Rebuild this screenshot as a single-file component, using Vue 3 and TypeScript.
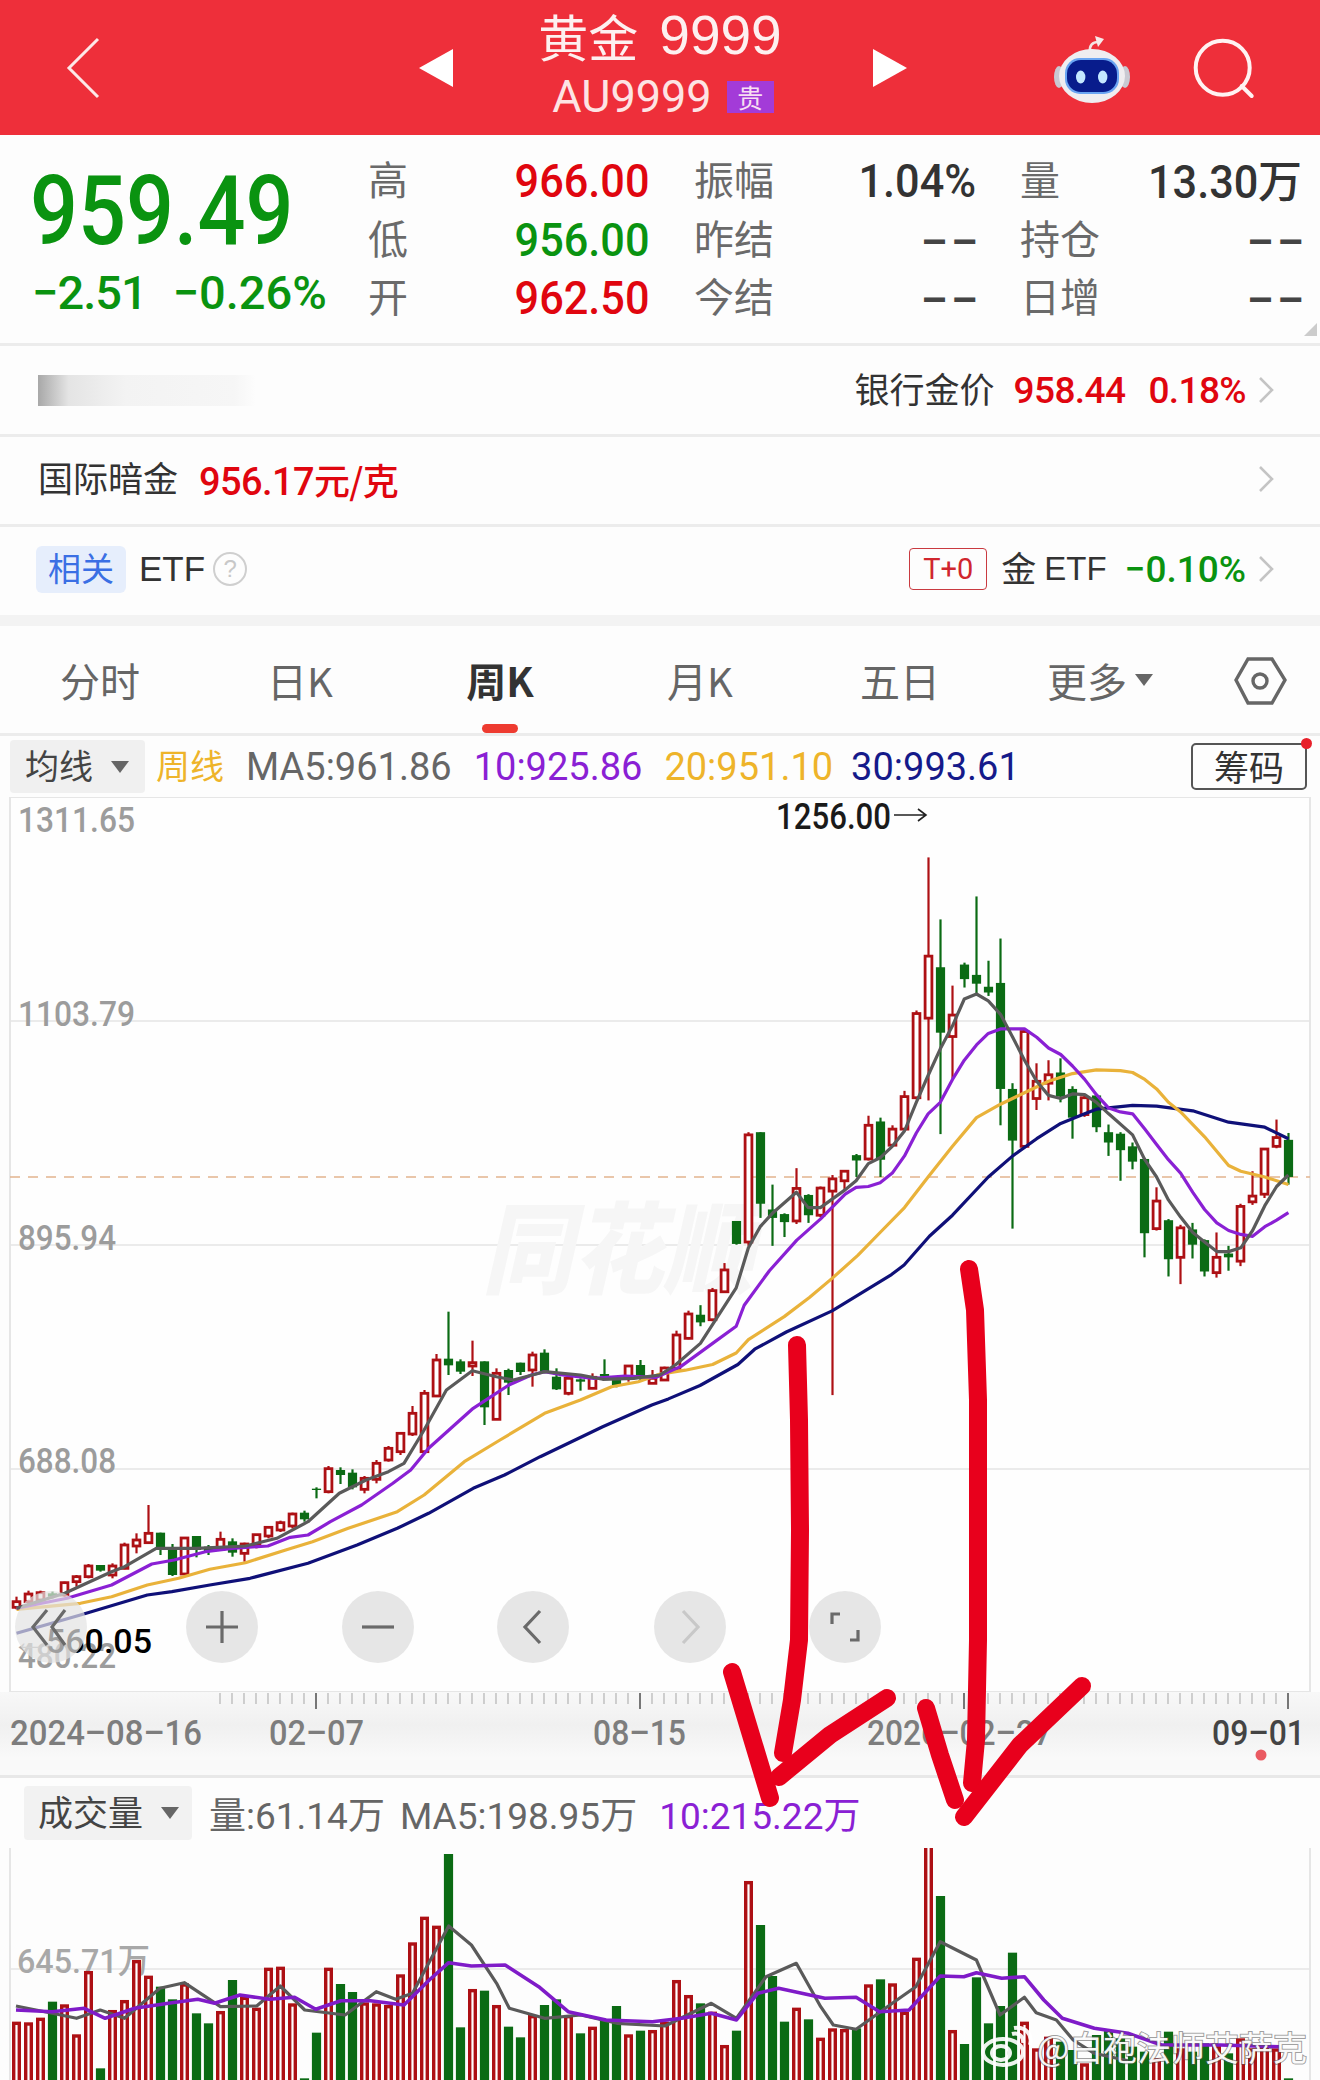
<template>
  <div class="page">
    <header class="topbar">
      <svg class="back" viewBox="0 0 34 62"><path d="M32 2 3 31l29 29" /></svg>
      <div class="arrow-l"></div>
      <div class="title">
        <div class="title__name"><span class="title__cjk">黄金</span><span>9999</span></div>
        <div class="title__code">AU9999<span class="title__tag">贵</span></div>
      </div>
      <div class="arrow-r"></div>
      <svg class="robot" viewBox="1050 30 84 74">
        <path d="M1090 50c-1-7 3-10 8-10" fill="none" stroke="#f3e4e4" stroke-width="2.6" />
        <path d="M1095 34l9 3-6 8z" fill="#f7eaea" />
        <ellipse cx="1059" cy="75" rx="5" ry="11" fill="#c9c9d2" />
        <ellipse cx="1125" cy="75" rx="5" ry="11" fill="#c9c9d2" />
        <ellipse cx="1092" cy="74" rx="33" ry="27" fill="#efedf0" />
        <rect x="1065" y="56" width="54" height="36" rx="15" fill="#6aa4f2" />
        <rect x="1067" y="58" width="50" height="32" rx="14" fill="#081c8c" />
        <ellipse cx="1080.7" cy="75" rx="4.7" ry="6.5" fill="#c4e8ff" />
        <ellipse cx="1102.7" cy="75" rx="4.7" ry="6.5" fill="#c4e8ff" />
      </svg>
      <svg class="search" viewBox="1190 34 68 66">
        <circle cx="1222.7" cy="66.7" r="27" />
        <path d="M1241.7 85l10 10" />
      </svg>
    </header>

    <section class="quote">
      <div class="quote__main">
        <div class="quote__price">959.49</div>
        <div class="quote__change">
          <span>−2.51</span>
          <span>−0.26%</span>
        </div>
      </div>
      <div class="quote__grid">
        <div v-for="cell in quoteCells" :key="cell.label" class="cell">
          <span class="cell__label">{{ cell.label }}</span>
          <span class="cell__value" :class="cell.tone">
            <span class="narrow">{{ cell.value }}</span><span v-if="cell.unit" class="cell__unit">{{ cell.unit }}</span>
          </span>
        </div>
      </div>
      <div class="quote__corner"></div>
    </section>

    <div class="info-row info-row--first">
      <div class="blurred"></div>
      <div class="info-row__right">
        <span class="info-text">银行金价</span>
        <span class="info-num red">958.44</span>
        <span class="info-num red info-num--pct">0.18%</span>
        <svg class="chev" viewBox="0 0 16 26"><path d="M2 1l12 12L2 25" /></svg>
      </div>
    </div>
    <div class="info-row info-row--gold">
      <span class="info-text">国际暗金</span>
      <span class="info-num red info-num--gold">956.17<span class="info-cjk">元/克</span></span>
      <svg class="chev chev--end" viewBox="0 0 16 26"><path d="M2 1l12 12L2 25" /></svg>
    </div>
    <div class="info-row info-row--last">
      <span class="badge-rel">相关</span>
      <span class="etf">ETF</span>
      <span class="help">?</span>
      <div class="info-row__right">
        <span class="badge-t0">T+0</span>
        <span class="etf etf--gold"><span class="info-text">金</span> ETF</span>
        <span class="info-num green info-num--etf">−0.10%</span>
        <svg class="chev" viewBox="0 0 16 26"><path d="M2 1l12 12L2 25" /></svg>
      </div>
    </div>
    <div class="gap"></div>

    <nav class="tabs">
      <div
        v-for="tab in tabs"
        :key="tab"
        class="tabs__item"
        :class="{ 'tabs__item--active': tab === '周K' }"
      >
        {{ tab }}<i v-if="tab === '更多'" class="caret caret--more"></i>
      </div>
      <div class="tabs__gear">
        <svg viewBox="1234 657 53 48">
          <path d="M1236 680l12-21h24l13 21-13 23h-24z" />
          <circle cx="1260" cy="681" r="7" />
        </svg>
      </div>
    </nav>

    <div class="ma-row">
      <div class="pick"><span class="pick__text">均线</span><i class="caret"></i></div>
      <span class="ma-week">周线</span>
      <span class="ma-val">MA5:961.86</span>
      <span class="ma-val purple">10:925.86</span>
      <span class="ma-val orange">20:951.10</span>
      <span class="ma-val navy">30:993.61</span>
      <div class="chips">筹码<i class="chips__dot"></i></div>
    </div>

    <svg class="kline" viewBox="0 797 1320 895">
      <rect x="10" y="797" width="1300" height="895" fill="#fefefe" stroke="#e6e6e6" stroke-width="2" />
      <line v-for="y in [1021, 1245, 1469]" :key="y" x1="10" x2="1310" :y1="y" :y2="y" stroke="#e4e4e4" stroke-width="1.5" />
      <text x="482" y="1286" class="watermark" textLength="272" lengthAdjust="spacingAndGlyphs">同花顺</text>
      <line x1="10" x2="1310" y1="1177" y2="1177" stroke="#e2b48f" stroke-width="1.5" stroke-dasharray="10 8" />
      <text
        v-for="label in priceLabels"
        :key="label.text"
        x="18"
        :y="label.y"
        class="price-label"
        :textLength="label.w"
        lengthAdjust="spacingAndGlyphs"
      >{{ label.text }}</text>

      <g v-for="c in candles" :key="c.x">
        <line :x1="c.x" :x2="c.x" :y1="c.hi" :y2="c.lo" :stroke="c.up ? RED : GREEN" stroke-width="2.2" />
        <rect
          v-if="c.up"
          :x="c.x - 3.4"
          :y="c.top"
          width="6.8"
          :height="c.bot - c.top"
          fill="#fff"
          :stroke="RED"
          stroke-width="2.8"
        />
        <rect v-else :x="c.x - 4.6" :y="c.top" width="9.2" :height="c.bot - c.top" :fill="GREEN" />
      </g>

      <polyline v-for="line in maLines" :key="line.color" :points="line.points" :stroke="line.color" class="ma-line" />

      <text x="776" y="829" class="peak" textLength="115" lengthAdjust="spacingAndGlyphs">1256.00</text>
      <path d="M894 815h32m-8-6 8 6-8 6" fill="none" stroke="#222" stroke-width="1.6" />

      <text x="152" y="1653" text-anchor="end" class="low"><tspan fill="#aaa">←</tspan>560.05</text>

      <g v-for="b in zoomButtons" :key="b.x">
        <ellipse :cx="b.x" cy="1627" rx="36" ry="36" fill="#e3e3e3" :fill-opacity="b.x === 51 ? 0.7 : 0.88" />
        <path
          :d="b.d"
          fill="none"
          :stroke="b.dim ? '#c8c8c8' : '#6a6a6a'"
          stroke-width="3.2"
          :transform="`translate(${b.x} 1627)`"
        />
      </g>
    </svg>

    <div class="axis">
      <svg viewBox="0 1692 1320 86">
        <line v-for="x in axisTicks" :key="x" :x1="x" :x2="x" y1="1693" y2="1704" stroke="#c4c4c4" stroke-width="1.6" />
        <line v-for="x in [316, 640, 964, 1288]" :key="x" :x1="x" :x2="x" y1="1693" y2="1709" stroke="#777" stroke-width="2" />
        <text
          v-for="d in axisDates"
          :key="d.text"
          :x="d.x"
          y="1745"
          class="axis-date"
          :fill="d.dark ? '#444' : '#7d7d7d'"
          :textLength="d.w"
          lengthAdjust="spacingAndGlyphs"
        >{{ d.text }}</text>
        <circle cx="1261" cy="1755" r="5.5" fill="#ea5a62" />
      </svg>
    </div>

    <div class="vol-head">
      <div class="pick pick--vol"><span class="pick__text">成交量</span><i class="caret"></i></div>
      <span class="vol-val">量:61.14万</span>
      <span class="vol-val">MA5:198.95万</span>
      <span class="vol-val purple">10:215.22万</span>
    </div>

    <svg class="vol" viewBox="0 1848 1320 232">
      <line x1="10" x2="10" y1="1848" y2="2080" stroke="#e6e6e6" stroke-width="2" />
      <line x1="1310" x2="1310" y1="1848" y2="2080" stroke="#e6e6e6" stroke-width="2" />
      <line x1="10" x2="1310" y1="1969" y2="1969" stroke="#e4e4e4" stroke-width="1.5" />
      <text x="17" y="1973" class="vol-label" textLength="133" lengthAdjust="spacingAndGlyphs">645.71万</text>
      <g v-for="b in volBars" :key="b.x">
        <rect
          v-if="b.up"
          :x="b.x - 2.8"
          :y="b.top"
          width="5.6"
          :height="2090 - b.top"
          fill="#fff"
          stroke="#ad1014"
          stroke-width="3.4"
        />
        <rect v-else :x="b.x - 4.6" :y="b.top" width="9.2" :height="2090 - b.top" :fill="GREEN" />
      </g>
      <polyline :points="volMa5" stroke="#5a5a5a" class="ma-line" />
      <polyline :points="volMa10" stroke="#7f1bc8" class="ma-line ma-line--thick" />
      <g class="weibo">
        <ellipse cx="1003" cy="2052" rx="20" ry="13" />
        <ellipse cx="1001" cy="2053" rx="9" ry="7" />
        <path d="M1012 2034c7-2 12 3 11 9M1014 2028c11-2 19 6 16 17" />
      </g>
      <text x="1037" y="2061" class="mark" textLength="270">@白袍法师艾萨克</text>
    </svg>

    <svg class="scribble" viewBox="0 0 1320 2080">
      <polyline points="797,1345 799,1420 800,1530 799,1640 792,1700 783,1753" />
      <polyline points="732,1672 751,1735 770,1798" />
      <polyline points="887,1698 830,1735 779,1777" />
      <polyline points="969,1269 975,1310 978,1400 978,1640 976,1740 972,1783" />
      <polyline points="926,1708 940,1755 955,1800" />
      <polyline points="1082,1686 1020,1745 964,1817" />
    </svg>
  </div>
</template>

<script setup lang="ts">
type CandleRow = [number, number, number, number, number];

const RED = "#ad1014";
const GREEN = "#0b6b14";

const quoteCells = [
  { label: "高", value: "966.00", tone: "red" },
  { label: "振幅", value: "1.04%", tone: "dark" },
  { label: "量", value: "13.30", unit: "万", tone: "dark" },
  { label: "低", value: "956.00", tone: "green" },
  { label: "昨结", value: "––", tone: "dash" },
  { label: "持仓", value: "––", tone: "dash" },
  { label: "开", value: "962.50", tone: "red" },
  { label: "今结", value: "––", tone: "dash" },
  { label: "日增", value: "––", tone: "dash" },
];

const tabs = ["分时", "日K", "周K", "月K", "五日", "更多"];

const priceLabels = [
  { text: "1311.65", y: 832, w: 117 },
  { text: "1103.79", y: 1026, w: 117 },
  { text: "895.94", y: 1250, w: 98 },
  { text: "688.08", y: 1473, w: 98 },
  { text: "480.22", y: 1668, w: 98 },
];

const zoomButtons = [
  { x: 51, d: "M-4-17-18 0-4 18M14-17 1 0 14 18" },
  { x: 222, d: "M-16 0H16M0-16V16" },
  { x: 378, d: "M-16 0H16" },
  { x: 533, d: "M7-16-8 0 7 16" },
  { x: 690, d: "M-7-16 8 0-7 16", dim: true },
  { x: 845, d: "M-5-13H-13V-3M5 13H13V3" },
];

const axisTicks = Array.from({ length: 90 }, (_, i) => 1288 - i * 12);
const axisDates = [
  { text: "2024–08–16", x: 10, w: 192 },
  { text: "02–07", x: 269, w: 95 },
  { text: "08–15", x: 593, w: 93 },
  { text: "2026–02–27", x: 867, w: 185 },
  { text: "09–01", x: 1212, w: 93, dark: true },
];

// [color 1=up, high, bodyTop, bodyBottom, low], read off the chart, first part at 3x height
const earlyRows: CandleRow[] = [
  [1, 1190, 1205, 1222, 1228], [1, 1172, 1182, 1205, 1215], [1, 1172, 1178, 1200, 1205], [0, 1175, 1180, 1190, 1195],
  [1, 1145, 1148, 1185, 1190], [1, 1125, 1130, 1145, 1160], [1, 1092, 1098, 1130, 1135], [0, 1095, 1095, 1112, 1115],
  [1, 1090, 1098, 1125, 1135], [1, 1028, 1035, 1105, 1108], [1, 1000, 1020, 1038, 1060], [1, 915, 1000, 1028, 1030],
  [0, 998, 998, 1048, 1065], [0, 1032, 1048, 1125, 1128], [1, 1012, 1014, 1122, 1125], [0, 1008, 1008, 1050, 1072],
  [0, 1035, 1040, 1055, 1065], [1, 995, 1018, 1048, 1052], [0, 1015, 1024, 1058, 1070], [1, 1028, 1032, 1060, 1085],
  [1, 1002, 1004, 1035, 1045], [1, 978, 982, 1008, 1015], [1, 962, 968, 990, 996], [1, 938, 942, 978, 985],
  [0, 932, 938, 958, 965], [0, 862, 866, 870, 895], [1, 798, 806, 875, 880], [0, 802, 810, 825, 852],
  [0, 808, 818, 862, 868], [1, 828, 835, 868, 880], [1, 780, 790, 838, 850], [1, 738, 745, 780, 785],
  [1, 698, 700, 755, 765], [1, 618, 640, 702, 708], [1, 570, 580, 755, 762], [1, 462, 480, 588, 590],
  [0, 335, 476, 496, 525], [0, 478, 484, 515, 522], [1, 422, 488, 498, 528], [0, 484, 484, 622, 675],
  [1, 505, 520, 658, 660], [0, 506, 510, 548, 585], [0, 488, 488, 516, 525], [1, 455, 465, 510, 560],
  [0, 448, 458, 515, 520], [0, 505, 530, 568, 570], [1, 530, 535, 580, 586], [0, 535, 538, 545, 572],
  [1, 520, 532, 565, 566], [0, 478, 522, 530, 540], [0, 530, 535, 555, 562], [1, 495, 498, 535, 545],
  [0, 480, 495, 530, 540], [1, 510, 535, 550, 552], [1, 500, 504, 540, 542], [1, 392, 405, 505, 510],
  [1, 332, 342, 415, 418],
];
const lateRows: CandleRow[] = [
  [0, 1320, 1345, 1365, 1375], [1, 1275, 1282, 1358, 1362], [1, 1210, 1228, 1285, 1286], [0, 1100, 1100, 1160, 1162],
  [1, 868, 875, 1155, 1165], [0, 868, 868, 1055, 1092], [0, 1005, 1070, 1092, 1165], [0, 1080, 1082, 1103, 1142],
  [1, 962, 1015, 1100, 1108], [0, 1030, 1032, 1085, 1105], [1, 1010, 1014, 1085, 1090], [1, 980, 990, 1022, 1555],
  [1, 968, 970, 995, 1020], [0, 925, 928, 942, 985], [1, 825, 850, 938, 942], [0, 830, 840, 940, 985],
  [1, 850, 860, 902, 905], [1, 760, 775, 860, 862], [1, 550, 558, 778, 782], [1, 150, 408, 570, 785],
  [0, 312, 437, 608, 873], [1, 485, 562, 618, 728], [0, 425, 430, 468, 490], [0, 252, 457, 480, 512],
  [0, 420, 488, 503, 512], [0, 362, 478, 755, 850], [0, 740, 755, 890, 1120], [1, 600, 605, 905, 908],
  [1, 688, 735, 780, 810], [1, 680, 718, 740, 785], [0, 675, 712, 775, 790], [0, 748, 755, 830, 885],
  [1, 770, 778, 822, 828], [0, 770, 772, 855, 868], [0, 848, 868, 895, 930], [0, 868, 872, 915, 995],
  [0, 895, 905, 945, 965], [0, 935, 938, 1132, 1195], [1, 1012, 1048, 1120, 1125], [0, 1095, 1098, 1200, 1245],
  [1, 1110, 1118, 1195, 1265], [0, 1105, 1122, 1162, 1198], [0, 1148, 1150, 1232, 1245], [1, 1130, 1195, 1235, 1248],
  [0, 1165, 1185, 1195, 1230], [1, 1055, 1062, 1205, 1218], [1, 970, 1035, 1050, 1058], [1, 910, 912, 1030, 1040],
  [1, 835, 882, 905, 910], [0, 870, 888, 985, 1005],
];

const earlyY = (v: number) => 1200 + v / 3;
const lateY = (v: number) => 800 + v / 2.613;
const barX = (i: number) => 16.5 + 12 * i;

const candles = [
  ...earlyRows.map((r) => ({ r, y: earlyY })),
  ...lateRows.map((r) => ({ r, y: lateY })),
].map(({ r, y }, i) => ({
  x: barX(i),
  up: r[0] === 1,
  hi: y(r[1]),
  top: y(r[2]),
  bot: y(r[3]),
  lo: y(r[4]),
}));

function chartLine(early: number[][], late: number[][]) {
  const a = early.map(([x, y]) => `${(x / 2.24).toFixed(1)},${earlyY(y).toFixed(1)}`);
  const b = late.map(([x, y]) => `${(660 + x / 2.376).toFixed(1)},${lateY(y).toFixed(1)}`);
  return [...a, ...b].join(" ");
}

const maLines = [
  {
    color: "#0f1078",
    points: chartLine(
      [[37, 1300], [180, 1245], [330, 1185], [385, 1175], [470, 1155], [560, 1135], [690, 1090], [800, 1035], [890, 985], [960, 940], [1060, 865], [1130, 825], [1210, 770], [1350, 680], [1460, 615]],
      [[20, 1565], [95, 1530], [185, 1475], [225, 1435], [300, 1390], [409, 1335], [550, 1240], [580, 1215], [640, 1140], [695, 1085], [780, 985], [838, 930], [895, 885], [952, 845], [1009, 820], [1037, 808], [1123, 798], [1180, 800], [1266, 812], [1351, 842], [1437, 855], [1493, 885]],
    ),
  },
  {
    color: "#e9b23a",
    points: chartLine(
      [[37, 1228], [180, 1210], [250, 1190], [330, 1155], [400, 1135], [470, 1108], [550, 1088], [640, 1050], [700, 1025], [780, 985], [890, 935], [950, 885], [1040, 785], [1120, 720], [1220, 640], [1300, 600], [1370, 560], [1430, 545]],
      [[0, 1500], [60, 1490], [125, 1475], [181, 1445], [210, 1410], [295, 1350], [355, 1300], [409, 1250], [470, 1190], [523, 1130], [581, 1065], [637, 985], [695, 905], [752, 830], [809, 795], [866, 765], [923, 735], [980, 715], [1037, 705], [1094, 707], [1123, 712], [1152, 730], [1180, 755], [1208, 790], [1237, 815], [1294, 880], [1351, 955], [1380, 970], [1437, 985], [1493, 1005]],
    ),
  },
  {
    color: "#8a20d4",
    points: chartLine(
      [[37, 1225], [150, 1195], [250, 1155], [340, 1092], [390, 1080], [460, 1055], [520, 1045], [600, 1038], [650, 1012], [690, 1005], [740, 965], [810, 915], [880, 850], [920, 810], [960, 745], [1010, 685], [1060, 625], [1100, 590], [1140, 555], [1190, 525], [1220, 515], [1260, 525], [1330, 535], [1400, 528], [1470, 532]],
      [[50, 1480], [125, 1420], [181, 1375], [200, 1320], [260, 1230], [325, 1150], [381, 1095], [440, 1030], [466, 1012], [495, 1010], [523, 1000], [552, 975], [581, 930], [609, 870], [637, 820], [666, 790], [695, 730], [723, 680], [752, 640], [780, 610], [809, 598], [866, 598], [895, 620], [923, 648], [952, 665], [980, 695], [1009, 730], [1037, 770], [1066, 805], [1094, 815], [1123, 820], [1152, 860], [1180, 900], [1208, 940], [1237, 975], [1266, 1025], [1294, 1070], [1323, 1105], [1351, 1125], [1380, 1135], [1408, 1140], [1437, 1115], [1465, 1098], [1493, 1078]],
    ),
  },
  {
    color: "#5a5a5a",
    points: chartLine(
      [[37, 1225], [145, 1180], [250, 1115], [279, 1100], [350, 1045], [440, 1045], [550, 1038], [620, 1015], [690, 965], [760, 880], [820, 840], [870, 815], [905, 790], [950, 690], [1000, 570], [1058, 512], [1112, 530], [1150, 540], [1220, 515], [1300, 525], [1350, 538], [1420, 535], [1478, 525]],
      [[38, 1475], [96, 1420], [181, 1275], [210, 1170], [238, 1115], [267, 1080], [324, 1025], [352, 1065], [381, 1065], [438, 1020], [466, 995], [495, 950], [523, 935], [552, 905], [581, 865], [609, 790], [637, 720], [666, 650], [695, 590], [723, 520], [752, 507], [780, 525], [809, 560], [838, 620], [866, 680], [895, 735], [923, 772], [952, 780], [980, 768], [1009, 770], [1037, 790], [1066, 820], [1123, 875], [1152, 940], [1180, 985], [1208, 1045], [1237, 1090], [1266, 1130], [1294, 1155], [1323, 1180], [1351, 1180], [1380, 1170], [1408, 1125], [1437, 1060], [1465, 1010], [1493, 980]],
    ),
  },
];

const volTops = [
  1150, 1152, 1138, 1085, 1098, 1188, 998, 1285, 1115, 1085, 965, 1012, 1040, 1078, 1035, 1120,
  1150, 1118, 1020, 1075, 1108, 988, 985, 1095, 1315, 1178, 988, 1032, 1056, 1092, 1095, 1100,
  1008, 912, 835, 862, 642, 1162, 1052, 1052, 1100, 1160, 1192, 1130, 1095, 1078, 1130, 1180,
  1165, 1140, 1098, 1188, 1172, 1175, 1150, 1025, 1070, 1090, 1120, 1220, 1172, 728, 855, 1008,
  1145, 1108, 1138, 1198, 1170, 1172, 1165, 1038, 1018, 1035, 1120, 958, 615, 768, 1175, 1212,
  1012, 1150, 1098, 938, 1150, 1230, 1195, 1205, 1230, 1275, 1185, 1170, 1195, 1220, 1235, 1260,
  1175, 1230, 1235, 1210, 1220, 1240, 1200, 1230, 1220, 1230, 1315,
];

const volBars = volTops.map((v, i) => ({
  x: barX(i),
  up: candles[i].up,
  top: 1640 + v / 3,
}));

function volLine(points: number[][]) {
  return points.map(([x, y]) => `${(x / 1.188).toFixed(1)},${(1640 + y / 3).toFixed(1)}`).join(" ");
}

const volMa5 = volLine([
  [19, 1098], [62, 1120], [91, 1135], [119, 1110], [148, 1135], [190, 1045], [219, 1028], [262, 1100], [305, 1098], [333, 1038],
  [362, 1110], [410, 1125], [447, 1055], [470, 1078], [490, 1060], [533, 858], [560, 915], [590, 1030], [605, 1105], [647, 1135],
  [690, 1125], [733, 1150], [790, 1158], [845, 1090], [875, 1135], [910, 1010], [946, 970], [975, 1100], [990, 1155], [1017, 1168],
  [1060, 1090], [1088, 1040], [1117, 905], [1160, 960], [1188, 1125], [1217, 1072], [1231, 1118], [1255, 1140], [1275, 1200], [1300, 1240],
  [1340, 1262],
]);
const volMa10 = volLine([
  [19, 1110], [62, 1115], [100, 1105], [125, 1135], [160, 1105], [200, 1090], [235, 1078], [255, 1090], [285, 1065], [320, 1078],
  [350, 1072], [375, 1108], [405, 1082], [440, 1082], [480, 1095], [510, 1020], [533, 968], [560, 978], [600, 975], [640, 1040],
  [675, 1115], [720, 1140], [775, 1145], [810, 1135], [845, 1120], [875, 1140], [900, 1060], [925, 1045], [980, 1075], [1017, 1072],
  [1045, 1115], [1080, 1110], [1117, 1008], [1145, 1010], [1160, 998], [1190, 1015], [1217, 1010], [1240, 1080], [1262, 1135], [1300, 1165],
  [1340, 1180], [1380, 1215], [1450, 1215], [1520, 1220],
]);
</script>

<style scoped>
.page {
  position: relative;
  width: 1320px;
  height: 2080px;
  overflow: hidden;
  background: #fdfdfd;
  font-family: "Liberation Sans", "Noto Sans CJK SC", sans-serif;
  color: #333;
}

/* the app's digits are a narrow face, so they get squeezed */
.narrow {
  display: inline-block;
  transform: scaleX(0.94);
  transform-origin: right center;
}

.topbar {
  position: relative;
  height: 135px;
  background: #ee2f3a;
  display: flex;
  align-items: center;
  color: #fff;
}

.back {
  width: 34px;
  height: 62px;
  margin-left: 66px;
  fill: none;
  stroke: #fde8e8;
  stroke-width: 3;
}

.arrow-l {
  margin-left: 319px;
  border: solid transparent;
  border-width: 19px 34px 19px 0;
  border-right-color: #fff;
}

.arrow-r {
  border: solid transparent;
  border-width: 19px 0 19px 34px;
  border-left-color: #fff;
}

.title {
  width: 420px;
  text-align: center;
}

.title__name {
  display: flex;
  justify-content: center;
  align-items: center;
  gap: 21px;
  height: 60px;
  margin: -16px 0 0 -6px;
  font: 55px/60px "Liberation Sans", sans-serif;
  color: #fdf0f0;
}

.title__cjk {
  font: 50px/60px "Noto Sans CJK SC", sans-serif;
}

.title__code {
  display: flex;
  justify-content: center;
  align-items: center;
  margin-top: 14px;
  font-size: 45px;
  line-height: 36px;
  font-family: Roboto, "Liberation Sans", sans-serif;
  color: #fde4e4;
}

.title__tag {
  width: 47px;
  height: 32px;
  margin-left: 15px;
  background: #a33bd8;
  color: #f7dff2;
  font: 26px/32px "Noto Sans CJK SC", sans-serif;
  text-align: center;
}

.robot {
  width: 84px;
  height: 74px;
  margin-left: 143px;
  margin-top: 2px;
}

.search {
  width: 68px;
  height: 66px;
  margin-left: 56px;
  fill: none;
  stroke: #fff2f2;
  stroke-width: 4;
  stroke-linecap: round;
}

.quote {
  position: relative;
  display: flex;
  height: 208px;
  border-bottom: 3px solid #ececec;
}

.quote__main {
  width: 368px;
  box-sizing: border-box;
  padding: 42px 0 0 30px;
}

.quote__price {
  font: 500 96px/68px Roboto, sans-serif;
  color: #0a9310;
  transform: scaleX(0.88);
  transform-origin: left center;
}

.quote__change {
  display: flex;
  gap: 26px;
  margin-top: 30px;
  margin-left: 2px;
  font: 500 47px/36px Roboto, sans-serif;
  color: #0a9310;
}

.quote__change span:first-child {
  letter-spacing: -1px;
}

.quote__grid {
  display: grid;
  grid-template-columns: 282px 282px 282px;
  grid-auto-rows: 58.5px;
  column-gap: 44px;
  padding-top: 17px;
}

.cell {
  display: flex;
  justify-content: space-between;
  align-items: center;
}

.cell__label {
  padding-bottom: 6px;
  font: 40px "Noto Sans CJK SC", sans-serif;
  color: #6a6a6a;
}

.cell__value {
  font: 500 46px/1 Roboto, sans-serif;
}

.cell__unit {
  font: 500 44px/1 "Noto Sans CJK SC", sans-serif;
}

.cell__value.dash {
  padding-bottom: 3px;
  font: 700 45px/1 "Liberation Sans", sans-serif;
  letter-spacing: 7px;
  margin-right: -7px;
  color: #444;
}

.quote__corner {
  position: absolute;
  right: 3px;
  bottom: 7px;
  border-style: solid;
  border-width: 0 0 13px 13px;
  border-color: transparent transparent #ccc transparent;
}

.info-row {
  display: flex;
  align-items: center;
  height: 88px;
  padding: 0 46px 0 38px;
  border-bottom: 3px solid #ececec;
}

.info-row--last {
  border-bottom: 0;
  padding-left: 36px;
  height: 84px;
  padding-bottom: 4px;
}

.info-row__right {
  display: flex;
  align-items: center;
  margin-left: auto;
}

.blurred {
  width: 218px;
  height: 31px;
  background: linear-gradient(90deg, #a8a8a8, #e4e4e4 14%, #f3f3f3 40%, #f6f6f6 90%, #fdfdfd);
}

.info-text {
  padding-bottom: 6px;
  font: 35px "Noto Sans CJK SC", sans-serif;
  color: #333;
  white-space: nowrap;
}

.info-row--gold {
  height: 84px;
  padding-bottom: 3px;
}

.info-num {
  font: 500 37px/1 Roboto, sans-serif;
  letter-spacing: -0.6px;
  margin-left: 19px;
}

.info-num--pct {
  margin-left: 23px;
}

.info-num--gold {
  margin-left: 21px;
  font-size: 38px;
}

.info-num--etf {
  margin-left: 18px;
  letter-spacing: 0;
}

.info-cjk {
  font: 500 36px "Noto Sans CJK SC", sans-serif;
}

.chev {
  width: 16px;
  height: 26px;
  margin-left: 12px;
  fill: none;
  stroke: #c4c4c4;
  stroke-width: 2.6;
  flex: none;
}

.chev--end {
  margin-left: auto;
}

.badge-rel {
  width: 90px;
  height: 47px;
  background: #e6eefc;
  border-radius: 6px;
  color: #3a6fe4;
  font: 33px/43px "Noto Sans CJK SC", sans-serif;
  text-align: center;
}

.etf {
  margin-left: 13px;
  font: 35px "Liberation Sans", sans-serif;
  color: #333;
  white-space: nowrap;
}

.etf--gold {
  display: flex;
  align-items: center;
  gap: 8px;
  font-size: 33px;
  margin-left: 14px;
}

.help {
  width: 30px;
  height: 30px;
  margin-left: 8px;
  border: 2.5px solid #cfcfcf;
  border-radius: 50%;
  color: #c8c8c8;
  font: 24px/30px "Liberation Sans", sans-serif;
  text-align: center;
}

.badge-t0 {
  width: 76px;
  height: 40px;
  border: 1.5px solid #c93a40;
  border-radius: 4px;
  color: #d0262e;
  font: 29px/40px Roboto, sans-serif;
  text-align: center;
}

.gap {
  height: 11px;
  background: #f3f3f3;
}

.tabs {
  position: relative;
  display: flex;
  height: 110px;
  border-bottom: 3px solid #ececec;
  box-sizing: border-box;
}

.tabs__item {
  position: relative;
  width: 200px;
  display: flex;
  align-items: center;
  justify-content: center;
  box-sizing: border-box;
  font: 40px "Noto Sans CJK SC", sans-serif;
  color: #666;
}

.tabs__item--active {
  font-weight: 700;
  color: #333;
}

.tabs__item--active::after {
  content: "";
  position: absolute;
  left: 82px;
  bottom: 0;
  width: 36px;
  height: 9px;
  background: #ee3b30;
  border-radius: 5px;
}

.tabs__gear {
  width: 120px;
  display: flex;
  justify-content: center;
  padding-top: 31px;
}

.tabs__gear svg {
  width: 53px;
  height: 48px;
  fill: none;
  stroke: #666;
  stroke-width: 3.4;
}

.caret {
  display: inline-block;
  margin-left: 18px;
  border: solid transparent;
  border-width: 12px 9px 0;
  border-top-color: #666;
}

.caret--more {
  margin-left: 8px;
}

.ma-row {
  display: flex;
  align-items: center;
  height: 61px;
  padding-right: 13px;
  white-space: nowrap;
}

.pick {
  display: flex;
  align-items: center;
  width: 135px;
  height: 53px;
  margin-left: 10px;
  padding-left: 15px;
  box-sizing: border-box;
  background: #f0f0f0;
  border-radius: 4px;
  font: 34px "Noto Sans CJK SC", sans-serif;
  color: #444;
}

.pick__text {
  padding-bottom: 5px;
}

.ma-week {
  margin-left: 11px;
  padding-bottom: 5px;
  font: 34px "Noto Sans CJK SC", sans-serif;
  color: #eeb42a;
}

.ma-val {
  margin-left: 22px;
  font: 38px Roboto, sans-serif;
  color: #666;
}

.ma-val.navy {
  margin-left: 18px;
}

.chips {
  position: relative;
  width: 116px;
  height: 47px;
  margin-left: auto;
  box-sizing: border-box;
  border: 2px solid #555;
  border-radius: 5px;
  font: 35px/41px "Noto Sans CJK SC", sans-serif;
  text-align: center;
}

.chips__dot {
  position: absolute;
  right: -7px;
  top: -7px;
  width: 11px;
  height: 11px;
  border-radius: 50%;
  background: #e8202a;
}

.kline {
  display: block;
  width: 1320px;
  height: 895px;
}

.watermark {
  font: italic 900 100px "Noto Sans CJK SC", sans-serif;
  fill: #f6f6f6;
}

.price-label {
  font: 500 35px Roboto, sans-serif;
  fill: #9c9c9c;
}

.peak {
  font: 500 36px Roboto, sans-serif;
  fill: #1a1a1a;
}

.low {
  font: 500 34px Roboto, sans-serif;
  fill: #000;
}

.ma-line {
  fill: none;
  stroke-width: 3.2;
  stroke-linejoin: round;
}

.ma-line--thick {
  stroke-width: 3.6;
}

.axis {
  height: 86px;
  border-bottom: 3px solid #e8e8e8;
  box-sizing: border-box;
  background: linear-gradient(180deg, #f8f8f8, #f0f0f0 40%, #f9f9f9 80%);
}

.axis svg {
  display: block;
  width: 1320px;
  height: 86px;
}

.axis-date {
  font: 500 35px Roboto, sans-serif;
}

.vol-head {
  display: flex;
  align-items: center;
  height: 70px;
  white-space: nowrap;
}

.pick--vol {
  width: 168px;
  height: 54px;
  margin-left: 24px;
  padding-left: 14px;
  font-size: 35px;
  background: #f2f2f2;
}

.vol-val {
  margin-left: 15px;
  font: 37px Roboto, "Noto Sans CJK SC", sans-serif;
  color: #666;
}

.pick + .vol-val {
  margin-left: 17px;
}

.vol-val.purple {
  margin-left: 22px;
}

.vol {
  display: block;
  width: 1320px;
  height: 232px;
}

.vol-label {
  font: 500 34px Roboto, "Noto Sans CJK SC", sans-serif;
  fill: #a8a8a8;
}

.weibo {
  fill: none;
  stroke: rgba(255, 255, 255, 0.92);
  stroke-width: 4;
}

.mark {
  font: 34px "Noto Sans CJK SC", sans-serif;
  fill: rgba(255, 255, 255, 0.95);
  stroke: rgba(80, 80, 80, 0.55);
  stroke-width: 2;
  paint-order: stroke;
}

.scribble {
  position: absolute;
  left: 0;
  top: 0;
  width: 1320px;
  height: 2080px;
  pointer-events: none;
  fill: none;
  stroke: #e8001c;
  stroke-width: 18;
  stroke-linecap: round;
  stroke-linejoin: round;
}

/* colour helpers last so they win over the text classes above */
.red { color: #e0060f; }
.green { color: #0a9310; }
.dark { color: #333; }
.purple { color: #8a20d4; }
.orange { color: #eeb42a; }
.navy { color: #151a8a; }
</style>
